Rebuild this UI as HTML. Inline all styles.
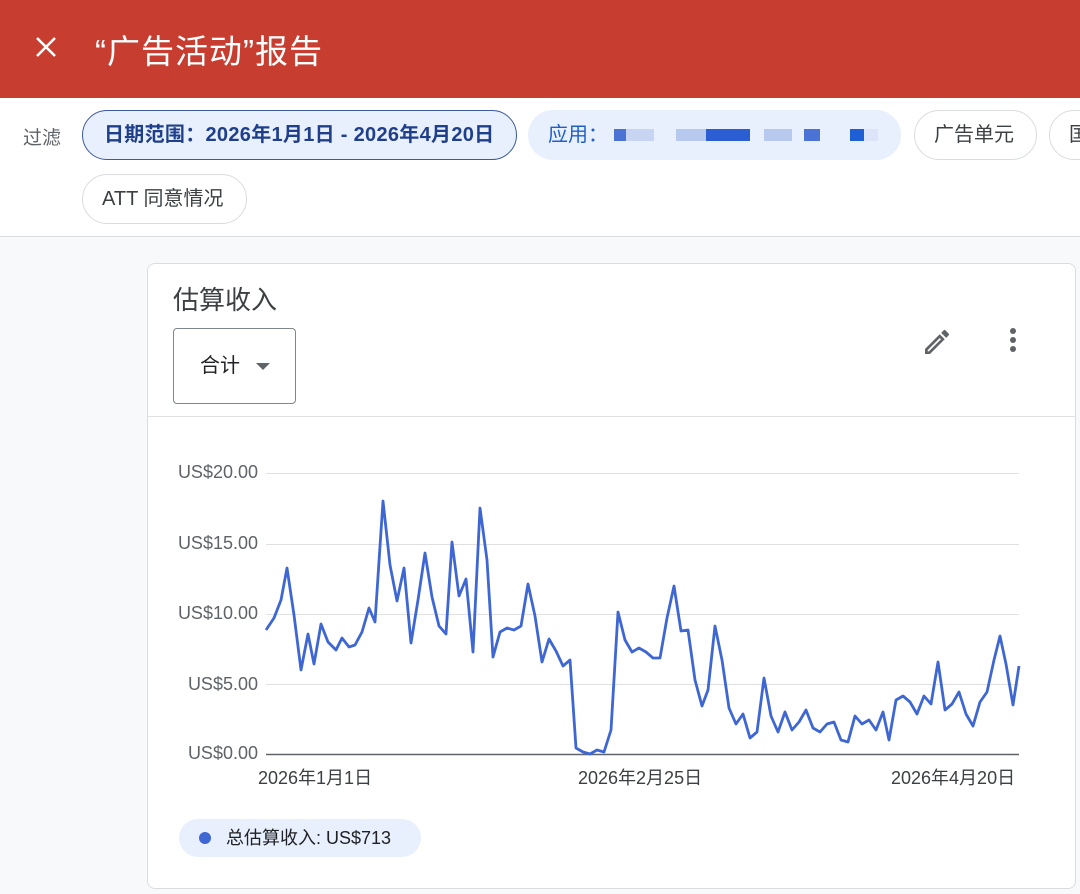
<!DOCTYPE html>
<html><head><meta charset="utf-8"><style>
*{box-sizing:border-box;margin:0;padding:0}
body{width:1080px;height:894px;overflow:hidden;background:#f8f9fa;font-family:"Liberation Sans","Noto Sans CJK SC",sans-serif;position:relative}
.hdr{position:absolute;left:0;top:0;width:1080px;height:98px;background:#c73e31;color:#fff}
.hdr .t{position:absolute;left:95px;top:25px;font-size:33px;letter-spacing:1px}
.filt{position:absolute;left:0;top:98px;width:1080px;height:139px;background:#fff;border-bottom:1px solid #dadce0}
.chip{position:absolute;height:50px;border-radius:25px;border:1px solid #dadce0;background:#fff;font-size:20px;color:#3c4043;line-height:48px;padding:0 19px;white-space:nowrap}
.card{position:absolute;left:147px;top:263px;width:929px;height:626px;background:#fff;border:1px solid #dadce0;border-radius:8px;overflow:hidden}
.yl{position:absolute;font-size:18px;color:#5f6368;text-align:right;width:110px}
.xl{position:absolute;font-size:18px;color:#3c4043}
</style></head><body>
<div class="hdr">
<svg style="position:absolute;left:35px;top:36px" width="22" height="22" viewBox="0 0 22 22"><path d="M2 2L20 20M20 2L2 20" stroke="#fff" stroke-width="2.6"/></svg>
<div class="t">“广告活动”报告</div>
</div>
<div class="filt">
<div style="position:absolute;left:23px;top:25px;font-size:19px;color:#5f6368">过滤</div>
<div class="chip" style="left:82px;top:12px;width:435px;background:#e8f0fe;border:1.5px solid #3d5a9e;color:#1f3f8a;font-weight:bold;padding-left:21px;font-size:20px;letter-spacing:0.3px">日期范围：2026年1月1日 - 2026年4月20日</div>
<div class="chip" style="left:528px;top:12px;width:373px;background:#e8f0fe;border-color:#e8f0fe;color:#1f5fc8">应用：
<span style="position:absolute;left:85px;top:18px;width:270px;height:12px;">
<i style="position:absolute;left:0;width:12px;height:12px;background:#4b73d6"></i>
<i style="position:absolute;left:12px;width:28px;height:12px;background:#c8d5f2"></i>
<i style="position:absolute;left:62px;width:30px;height:12px;background:#b8c9f0"></i>
<i style="position:absolute;left:92px;width:44px;height:12px;background:#2a5ed2"></i>
<i style="position:absolute;left:150px;width:28px;height:12px;background:#b8c9f0"></i>
<i style="position:absolute;left:190px;width:16px;height:12px;background:#4b73d6"></i>
<i style="position:absolute;left:236px;width:14px;height:12px;background:#1f5fd6"></i>
<i style="position:absolute;left:250px;width:14px;height:12px;background:#dbe4f8"></i>
</span></div>
<div class="chip" style="left:914px;top:12px;width:123px">广告单元</div>
<div class="chip" style="left:1049px;top:12px;width:60px">国</div>
<div class="chip" style="left:82px;top:76px;width:165px">ATT 同意情况</div>
</div>
<div class="card">
<div style="position:absolute;left:25px;top:16px;font-size:26px;color:#3c4043">估算收入</div>
<div style="position:absolute;left:25px;top:64px;width:123px;height:76px;border:1px solid #80868b;border-radius:4px;font-size:20px;line-height:74px;padding-left:26px;color:#202124">合计<span style="position:absolute;left:82px;top:34px;width:0;height:0;border-left:7px solid transparent;border-right:7px solid transparent;border-top:7px solid #5f6368"></span></div>
<svg style="position:absolute;left:773px;top:62px" width="32" height="32" viewBox="0 0 24 24"><path d="M3 17.25V21h3.75L17.81 9.94l-3.75-3.75L3 17.25zM5.92 19H5v-.92l9.06-9.06.92.92L5.92 19zM20.71 5.63l-2.34-2.34a1 1 0 0 0-1.410 0l-1.83 1.83 3.75 3.75 1.830-1.83a1 1 0 0 0 0-1.41z" fill="#5f6368"/></svg>
<svg style="position:absolute;left:855px;top:62px" width="20" height="32" viewBox="0 0 20 32"><circle cx="10" cy="5" r="3" fill="#5f6368"/><circle cx="10" cy="14" r="3" fill="#5f6368"/><circle cx="10" cy="23" r="3" fill="#5f6368"/></svg>
<div style="position:absolute;left:0;top:152px;width:929px;border-top:1px solid #e0e0e0"></div>
</div>
<div class="yl" style="left:148px;top:462px">US$20.00</div>
<div class="yl" style="left:148px;top:533px">US$15.00</div>
<div class="yl" style="left:148px;top:603px">US$10.00</div>
<div class="yl" style="left:148px;top:674px">US$5.00</div>
<div class="yl" style="left:148px;top:743px">US$0.00</div>
<svg style="position:absolute;left:0;top:0" width="1080" height="894">
<g stroke="#e0e0e0" stroke-width="1"><line x1="266" y1="473.5" x2="1019" y2="473.5"/><line x1="266" y1="544.5" x2="1019" y2="544.5"/><line x1="266" y1="614.5" x2="1019" y2="614.5"/><line x1="266" y1="684.5" x2="1019" y2="684.5"/></g>
<line x1="266" y1="754.5" x2="1019" y2="754.5" stroke="#5f6368" stroke-width="1.5"/>
<polyline fill="none" stroke="#3f67d3" stroke-width="2.8" stroke-linejoin="round" points="266,630 274,618 281,600 287,568 294,615 301,670 308,634 314,664 321,624 328,642 336,650 342,638 349,647 355,645 362,632 369,608 375,622 383,501 390,565 397,601 404,568 411,643 418,600 425,553 432,597 439,626 446,634 452,542 459,596 466,579 473,652 480,508 487,560 493,657 500,632 507,628 514,630 521,626 528,584 535,616 542,662 549,639 556,651 563,666 570,660 576,748 583,752 590,754 597,750 604,752 611,730 618,612 625,640 632,652 639,648 646,652 653,658 660,658 667,618 674,586 681,631 688,630 695,680 702,706 708,690 715,626 722,660 729,708 736,724 743,714 750,738 757,732 764,678 771,716 778,732 785,712 792,730 799,722 806,710 813,728 820,732 827,724 834,722 841,740 848,742 855,716 862,724 869,720 876,730 883,712 889,740 896,700 903,696 910,702 917,714 924,696 931,704 938,662 945,710 952,704 959,692 966,714 973,726 980,702 987,692 994,660 1000,636 1006,664 1013,705 1019,666"/>
</svg>
<div class="xl" style="left:258px;top:764px">2026年1月1日</div>
<div class="xl" style="left:578px;top:764px">2026年2月25日</div>
<div class="xl" style="left:891px;top:764px">2026年4月20日</div>
<div style="position:absolute;left:179px;top:819px;width:242px;height:38px;border-radius:19px;background:#e8f0fe;font-size:18px;line-height:38px;padding-left:47px;color:#202124">总估算收入: US$713<span style="position:absolute;left:20px;top:13px;width:12px;height:12px;border-radius:50%;background:#3f67d3"></span></div>
</body></html>
